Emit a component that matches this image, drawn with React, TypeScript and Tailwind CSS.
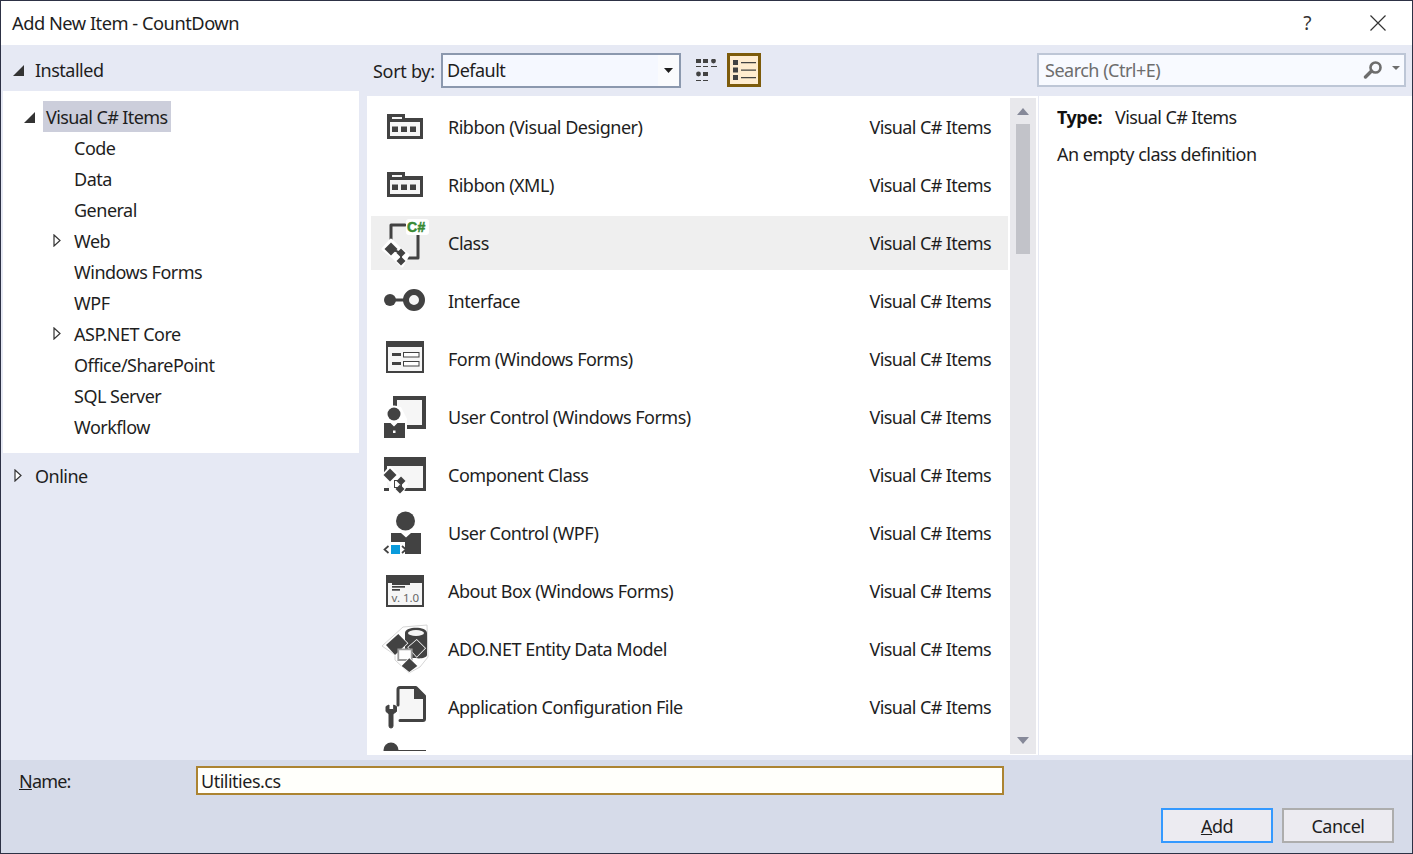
import React from "react";

const D = "#424242";
const P = "#f6f6f6";

function Box({ children }: { children: React.ReactNode }) {
  return (
    <svg width="48" height="48" viewBox="0 0 48 48" className="shrink-0 overflow-visible">
      {children}
    </svg>
  );
}

function Dia({ x, y, r, halo = 2 }: { x: number; y: number; r: number; halo?: number }) {
  const pts = `${x},${y - r} ${x + r},${y} ${x},${y + r} ${x - r},${y}`;
  return <polygon points={pts} fill={D} stroke="#fff" strokeWidth={halo} strokeLinejoin="round" paintOrder="stroke" />;
}

const Ribbon = () => (
  <Box>
    <path d="M9 17H39V33H9Z" fill={P} />
    <path fillRule="evenodd" d="M6 36V11H24V15H42V36ZM9 33H39V19H9Z" fill={D} />
    <path d="M11 14H21V16H11Z" fill={P} />
    <path d="M11 23.5h6v5.5h-6zM20 23.5h6v5.5h-6zM29 23.5h6v5.5h-6z" fill={D} />
  </Box>
);

const ClassIcon = () => (
  <Box>
    <path d="M24 6H10V21" fill="none" stroke={D} strokeWidth="3" strokeLinecap="round" strokeLinejoin="round" />
    <path d="M37 16V39H27" fill="none" stroke={D} strokeWidth="3" strokeLinecap="round" strokeLinejoin="round" />
    <path d="M2 30L10 21L19 30L27 36L21 47L12 38Z" fill="#fff" stroke="#fff" strokeWidth="3" strokeLinejoin="round" />
    <path d="M10 30L20 34V42" fill="none" stroke={D} strokeWidth="2" />
    <Dia x={10} y={30} r={6.5} halo={0} />
    <Dia x={20} y={34} r={4.5} halo={0} />
    <Dia x={20} y={42} r={4.5} halo={0} />
    <rect x="25" y="0" width="23" height="16" rx="3" fill="#fff" />
    <text x="26" y="13" fontFamily="'Liberation Sans',sans-serif" fontWeight="700" fontSize="14" fill="#388a34" stroke="#388a34" strokeWidth="0.5" letterSpacing="0.5">C#</text>
  </Box>
);

const Interface = () => (
  <Box>
    <circle cx="9" cy="23" r="6" fill={D} />
    <rect x="12" y="21.5" width="12" height="3" fill={D} />
    <circle cx="33" cy="23" r="8" fill={P} stroke={D} strokeWidth="6" />
  </Box>
);

const Form = () => (
  <Box>
    <rect x="5" y="6" width="38" height="32" fill={D} />
    <rect x="7" y="12" width="34" height="24" fill={P} />
    <rect x="11" y="18" width="9" height="3" fill={D} />
    <rect x="22.5" y="17.5" width="15.5" height="4.5" fill="#fff" stroke={D} />
    <rect x="11" y="27" width="9" height="3" fill={D} />
    <rect x="22.5" y="26.5" width="15.5" height="4.5" fill="#fff" stroke={D} />
  </Box>
);

const UserControl = () => (
  <Box>
    <path fillRule="evenodd" d="M12 3H45V36H26V32H41V7H16V14H12Z" fill={D} />
    <path d="M16 7H41V32H26V26L20 14H16Z" fill={P} />
    <circle cx="13" cy="21" r="8.5" fill="#fff" />
    <circle cx="13" cy="21" r="6.5" fill={D} />
    <path d="M3 30H9.5L13 33.5L16.5 30H24V45H3Z" fill={D} />
    <rect x="12" y="37.5" width="2.5" height="2.5" fill="#fff" />
  </Box>
);

const Component = () => (
  <Box>
    <path d="M3 6H45V40H20V37H42V15H6V24H3Z" fill={D} />
    <rect x="6" y="15" width="36" height="22" fill={P} />
    <path d="M3 37H8V40H3Z" fill={D} />
    <path d="M2 24L9 16L17 24L26 33L20 44L12 38L9 32Z" fill="#fff" stroke="#fff" strokeWidth="2" strokeLinejoin="round" />
    <rect x="13.5" y="29.5" width="7" height="7" fill="#fff" stroke={D} />
    <Dia x={9} y={24} r={6.5} halo={0} />
    <Dia x={20} y={30} r={4.5} halo={0} />
    <Dia x={19} y={38} r={4.5} halo={0} />
  </Box>
);

const UserWpf = () => (
  <Box>
    <circle cx="24.5" cy="12" r="9.5" fill={D} />
    <path d="M10 24H20L25 28.5L30 24H40V45H10Z" fill={D} />
    <rect x="0" y="33" width="24" height="13" fill="#fff" />
    <rect x="10" y="36" width="9" height="9" fill="#0a9bdc" />
    <path d="M7.5 37L3.5 40.5L7.5 44M21 37L25 40.5L21 44" fill="none" stroke={D} strokeWidth="1.7" />
  </Box>
);

const About = () => (
  <Box>
    <rect x="5" y="8" width="38" height="32" fill={D} />
    <rect x="7" y="16" width="34" height="22" fill={P} />
    <rect x="11" y="16" width="18" height="2" fill={D} />
    <rect x="11" y="19" width="13" height="1.7" fill={D} />
    <rect x="11" y="22" width="8" height="1.7" fill={D} />
    <text x="10.5" y="35.3" fontFamily="'Noto Sans',sans-serif" fontSize="11.5" letterSpacing="0" fill="#666">v. 1.0</text>
  </Box>
);

const Ado = () => (
  <Box>
    <path d="M1 21L22 2L46 0L47 32L39 42L28 48L14 35V30Z" fill="#fff" stroke="#d6d6d6" strokeWidth="1" strokeLinejoin="round" />
    <path d="M24 8C24 1 46 1 46 8V30C46 33 38 34 35 33H24Z" fill={D} />
    <ellipse cx="35" cy="8" rx="8" ry="3" fill="#f6f6f6" />
    <polygon points="5,20 17.3,9 26.3,18.3 14,30" fill={D} stroke="#fff" strokeWidth="1.5" paintOrder="stroke" />
    <polygon points="27.3,22.3 35.7,15 44,23.3 35.7,31.7" fill={D} stroke="#fff" strokeWidth="1.5" paintOrder="stroke" />
    <path d="M17.3 24.3H30.7V35H17.3Z" fill="#fff" stroke="#9c9c9c" strokeWidth="1.8" />
    <polygon points="20.7,41 28.3,33.3 36.3,41 28.3,47" fill={D} stroke="#fff" strokeWidth="1.5" paintOrder="stroke" />
  </Box>
);

const Config = () => (
  <Box>
    <path d="M17 22V6.5C17 5 18 4.5 19 4.5H35L43.5 13V36C43.5 37 43 37.5 42 37.5H19" fill={P} stroke={D} strokeWidth="3" strokeLinecap="round" strokeLinejoin="round" />
    <path d="M33 4L44 14V16H33Z" fill={D} />
    <path d="M5 23.5V28.5L8 31V43A2 2 0 0 0 12 43V31L15.5 28.5V23.5L12.7 22V26.5H8V22Z" fill={D} stroke={D} strokeWidth="1" strokeLinejoin="round" />
  </Box>
);

const Partial = () => (
  <Box>
    <circle cx="10" cy="11" r="7.5" fill={D} />
    <rect x="17" y="11" width="28" height="1" fill={D} />
    <rect x="0" y="12" width="48" height="36" fill="#fff" />
  </Box>
);

const items: { name: string; icon: React.ReactNode; selected?: boolean }[] = [
  { name: "Ribbon (Visual Designer)", icon: <Ribbon /> },
  { name: "Ribbon (XML)", icon: <Ribbon /> },
  { name: "Class", icon: <ClassIcon />, selected: true },
  { name: "Interface", icon: <Interface /> },
  { name: "Form (Windows Forms)", icon: <Form /> },
  { name: "User Control (Windows Forms)", icon: <UserControl /> },
  { name: "Component Class", icon: <Component /> },
  { name: "User Control (WPF)", icon: <UserWpf /> },
  { name: "About Box (Windows Forms)", icon: <About /> },
  { name: "ADO.NET Entity Data Model", icon: <Ado /> },
  { name: "Application Configuration File", icon: <Config /> },
];

const FilledArrow = ({ className }: { className: string }) => (
  <svg width="11" height="11" viewBox="0 0 11 11" className={className}>
    <path d="M11 0V11H0Z" fill="#333" />
  </svg>
);

const OpenArrow = ({ className }: { className: string }) => (
  <svg width="8" height="13" viewBox="0 0 8 13" className={className}>
    <path d="M1 1L7 6.5L1 12Z" fill="#fff" stroke="#333" strokeWidth="1.2" />
  </svg>
);

const tree: { label: string; arrow?: boolean }[] = [
  { label: "Code" },
  { label: "Data" },
  { label: "General" },
  { label: "Web", arrow: true },
  { label: "Windows Forms" },
  { label: "WPF" },
  { label: "ASP.NET Core", arrow: true },
  { label: "Office/SharePoint" },
  { label: "SQL Server" },
  { label: "Workflow" },
];

export default function App() {
  return (
    <div className="w-[1413px] h-[854px] flex flex-col overflow-hidden border border-[#2d3145] bg-white font-['Noto_Sans',sans-serif] text-[18px] leading-[24px] text-[#1e1e1e] tracking-[-0.5px] whitespace-nowrap">
      {/* title bar */}
      <div className="h-[44px] shrink-0 flex items-center bg-white">
        <span className="ml-[11px] text-[18.3px]">Add New Item - CountDown</span>
        <span className="ml-auto text-[#333] text-[19px] w-[20px] text-center mr-[53px] -mt-[1px]">?</span>
        <svg width="16" height="16" viewBox="0 0 16 16" className="mr-[26px]">
          <path d="M0.5 0.5L15.5 15.5M15.5 0.5L0.5 15.5" stroke="#333" strokeWidth="1.2" fill="none" />
        </svg>
      </div>

      {/* main */}
      <div className="flex-1 flex bg-[#e6e9f4] min-h-0">
        {/* left */}
        <div className="w-[366px] shrink-0 pl-[2px] pr-[8px] flex flex-col">
          <div className="h-[46px] pt-[4px] flex items-center shrink-0">
            <FilledArrow className="ml-[10px]" />
            <span className="ml-[11px]">Installed</span>
          </div>
          <div className="h-[362px] bg-white pt-[10px] pl-[21px] shrink-0">
            <div className="flex items-center h-[31px]">
              <FilledArrow className="mt-[2px]" />
              <span className="ml-[8px] h-[31px] w-[128px] bg-[#cccedb] pl-[3px] flex items-center tracking-[-0.6px]">Visual C# Items</span>
            </div>
            {tree.map((t) => (
              <div key={t.label} className="relative h-[31px] flex items-center pl-[50px]">
                {t.arrow && <OpenArrow className="absolute left-[29px] top-[9px]" />}
                {t.label}
              </div>
            ))}
          </div>
          <div className="h-[46px] flex items-center shrink-0">
            <OpenArrow className="ml-[11px] -mt-[2px]" />
            <span className="ml-[13px]">Online</span>
          </div>
        </div>

        {/* center */}
        <div className="w-[671px] shrink-0 flex flex-col">
          <div className="h-[51px] shrink-0 flex items-center">
            <span className="ml-[6px] w-[68px] tracking-[-0.3px]">Sort by:</span>
            <div className="w-[240px] h-[35px] -mt-[1px] border-2 border-[#8b98ae] bg-[#f5f8ff] flex items-center">
              <span className="pl-[4px]">Default</span>
              <span className="ml-auto w-[21px] h-full bg-[#fafbfd] flex items-center justify-center">
                <svg width="9" height="5" viewBox="0 0 9 5"><path d="M0 0H9L4.5 5Z" fill="#1e1e1e" /></svg>
              </span>
            </div>
            <svg width="22" height="23" viewBox="0 0 22 23" className="ml-[15px]" fill="#424242">
              <path d="M0 0h5v4H0zM7 0h5v4H7z" />
              <circle cx="17.5" cy="2" r="2.4" />
              <path d="M0 7h5v1H0zM7 7h5v1H7zM15 7h6v1h-6z" />
              <circle cx="2.5" cy="15" r="2.4" />
              <path d="M7 13h5v4H7z" />
              <path d="M0 21h5v1H0zM7 21h5v1H7z" />
            </svg>
            <div className="ml-[9px] w-[34px] h-[34px] -mt-[1px] border-[3px] border-[#7d5b0b] bg-[#ffeccf] flex items-center justify-center">
              <svg width="23" height="20" viewBox="0 0 23 20" fill="#424242">
                <path d="M0 0h5v5H0zM0 7.5h5v5H0zM0 15h5v5H0z" />
                <path d="M8 2h15v1.2H8zM8 9.5h15v1.2H8zM8 17h15v1.2H8z" />
              </svg>
            </div>
          </div>
          <div className="flex-1 min-h-0 flex bg-white mb-[5px]">
            <div className="w-[643px] bg-white overflow-hidden pt-[4px] h-[657px] pl-[4px] pr-[2px] flex flex-col gap-[4px]">
              {items.map((it) => (
                <div
                  key={it.name}
                  className={`h-[54px] shrink-0 flex items-center ${it.selected ? "bg-[#efefef]" : ""}`}
                >
                  <span className="ml-[10px] w-[67px] shrink-0">{it.icon}</span>
                  <span>{it.name}</span>
                  <span className="ml-auto mr-[17px] tracking-[-0.6px]">Visual C# Items</span>
                </div>
              ))}
              <div className="h-[54px] shrink-0 flex items-center -mt-[4px] pt-[4px]">
                <span className="ml-[10px] w-[67px] shrink-0"><Partial /></span>
              </div>
            </div>
            <div className="w-[26px] mt-[2px] h-[656px] bg-[#e8e8ec] flex flex-col items-center">
              <svg width="12" height="7" viewBox="0 0 12 7" className="mt-[10px]"><path d="M0 7L6 0L12 7Z" fill="#868999" /></svg>
              <div className="w-[14px] h-[130px] bg-[#c2c3c9] mt-[9px]" />
              <svg width="12" height="7" viewBox="0 0 12 7" className="mt-auto mb-[10px]"><path d="M0 0L6 7L12 0Z" fill="#868999" /></svg>
            </div>
            <div className="w-[2px] bg-white" />
          </div>
        </div>

        {/* right */}
        <div className="flex-1 min-w-0 flex flex-col">
          <div className="h-[51px] shrink-0 flex items-center">
            <div className="ml-[-1px] w-[369px] h-[34px] -mt-[1px] border-2 border-[#bdc6d6] bg-[#f8faff] flex items-center text-[#6d6d6d]">
              <span className="pl-[6px]">Search (Ctrl+E)</span>
              <svg width="21" height="18" viewBox="0 0 21 18" className="ml-auto">
                <circle cx="12.5" cy="6.5" r="5" fill="none" stroke="#6d6d6d" strokeWidth="2.6" />
                <path d="M8.5 10L2.5 16" stroke="#6d6d6d" strokeWidth="3.4" strokeLinecap="round" />
              </svg>
              <svg width="8" height="4" viewBox="0 0 8 4" className="ml-[8px] mr-[4px] -mt-[4px]"><path d="M0 0H8L4 4Z" fill="#6d6d6d" /></svg>
            </div>
          </div>
          <div className="flex-1 bg-white mb-[5px] ml-[1px] pl-[18px] pt-[9px]">
            <div className="h-[24px] flex"><span className="font-bold w-[58px] text-[#111]">Type:</span><span className="tracking-[-0.6px]">Visual C# Items</span></div>
            <div className="mt-[13px]">An empty class definition</div>
          </div>
        </div>
      </div>

      {/* bottom */}
      <div className="h-[93px] shrink-0 bg-[#d6dbe9] flex flex-col">
        <div className="flex items-center h-[29px] mt-[6px] shrink-0">
          <span className="ml-[18px] w-[177px] tracking-[-0.8px]"><span className="underline">N</span>ame:</span>
          <div className="w-[808px] h-[29px] border-2 border-[#ac8431] bg-[#fffffb] pl-[3px] flex items-center">Utilities.cs</div>
        </div>
        <div className="flex justify-end gap-[9px] mt-[13px] mr-[18px]">
          <button className="w-[112px] h-[35px] border-2 border-[#3399ff] bg-[#ecebf1]"><span className="underline">A</span>dd</button>
          <button className="w-[112px] h-[35px] border-2 border-[#adadad] bg-[#ecebf1]">Cancel</button>
        </div>
      </div>
    </div>
  );
}
